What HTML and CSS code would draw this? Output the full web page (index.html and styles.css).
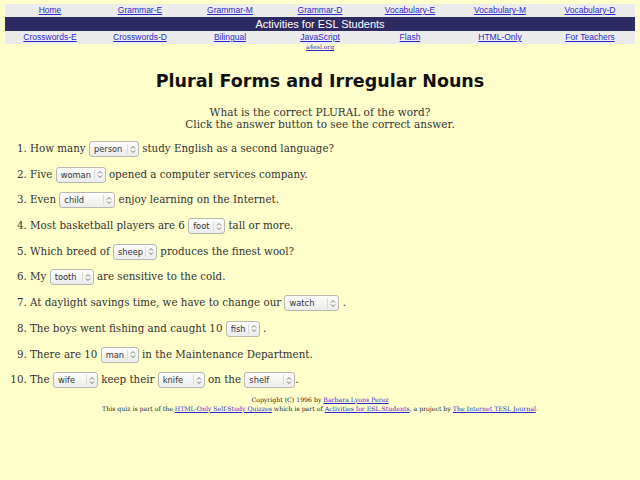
FILE: index.html
```html
<!DOCTYPE html>
<html lang="en">
<head>
<meta charset="utf-8">
<title>Plural Forms and Irregular Nouns</title>
<link rel="stylesheet" href="styles.css">
</head>
<body>
<table class="nav">
  <tr class="links">
    <td><a href="#">Home</a></td>
    <td><a href="#">Grammar-E</a></td>
    <td><a href="#">Grammar-M</a></td>
    <td><a href="#">Grammar-D</a></td>
    <td><a href="#">Vocabulary-E</a></td>
    <td><a href="#">Vocabulary-M</a></td>
    <td><a href="#">Vocabulary-D</a></td>
  </tr>
  <tr class="band">
    <td colspan="7">Activities for ESL Students</td>
  </tr>
  <tr class="links">
    <td><a href="#">Crosswords-E</a></td>
    <td><a href="#">Crosswords-D</a></td>
    <td><a href="#">Bilingual</a></td>
    <td><a href="#">JavaScript</a></td>
    <td><a href="#">Flash</a></td>
    <td><a href="#">HTML-Only</a></td>
    <td><a href="#">For Teachers</a></td>
  </tr>
</table>
<div class="site"><a href="#">a4esl.org</a></div>

<h1 class="title">Plural Forms and Irregular Nouns</h1>

<p class="intro">What is the correct PLURAL of the word?<br>Click the answer button to see the correct answer.</p>

<ol class="quiz">
  <li>How many <span class="sel"><select class="w50"><option>person</option><option>people</option></select><svg class="arr" viewBox="0 0 6 9"><path d="M1 3.5 L3 1.5 L5 3.5 M1 5.5 L3 7.5 L5 5.5"/></svg></span> study English as a second language?</li>
  <li>Five <span class="sel"><select class="w50"><option>woman</option><option>women</option></select><svg class="arr" viewBox="0 0 6 9"><path d="M1 3.5 L3 1.5 L5 3.5 M1 5.5 L3 7.5 L5 5.5"/></svg></span> opened a computer services company.</li>
  <li>Even <span class="sel"><select class="w56"><option>child</option><option>children</option></select><svg class="arr" viewBox="0 0 6 9"><path d="M1 3.5 L3 1.5 L5 3.5 M1 5.5 L3 7.5 L5 5.5"/></svg></span> enjoy learning on the Internet.</li>
  <li>Most basketball players are 6 <span class="sel"><select class="w37"><option>foot</option><option>feet</option></select><svg class="arr" viewBox="0 0 6 9"><path d="M1 3.5 L3 1.5 L5 3.5 M1 5.5 L3 7.5 L5 5.5"/></svg></span> tall or more.</li>
  <li>Which breed of <span class="sel"><select class="w44"><option>sheep</option><option>sheeps</option></select><svg class="arr" viewBox="0 0 6 9"><path d="M1 3.5 L3 1.5 L5 3.5 M1 5.5 L3 7.5 L5 5.5"/></svg></span> produces the finest wool?</li>
  <li>My <span class="sel"><select class="w44"><option>tooth</option><option>teeth</option></select><svg class="arr" viewBox="0 0 6 9"><path d="M1 3.5 L3 1.5 L5 3.5 M1 5.5 L3 7.5 L5 5.5"/></svg></span> are sensitive to the cold.</li>
  <li>At daylight savings time, we have to change our <span class="sel"><select class="w55"><option>watch</option><option>watches</option></select><svg class="arr" viewBox="0 0 6 9"><path d="M1 3.5 L3 1.5 L5 3.5 M1 5.5 L3 7.5 L5 5.5"/></svg></span> .</li>
  <li>The boys went fishing and caught 10 <span class="sel"><select class="w34"><option>fish</option><option>fishes</option></select><svg class="arr" viewBox="0 0 6 9"><path d="M1 3.5 L3 1.5 L5 3.5 M1 5.5 L3 7.5 L5 5.5"/></svg></span> .</li>
  <li>There are 10 <span class="sel"><select class="w38"><option>man</option><option>men</option></select><svg class="arr" viewBox="0 0 6 9"><path d="M1 3.5 L3 1.5 L5 3.5 M1 5.5 L3 7.5 L5 5.5"/></svg></span> in the Maintenance Department.</li>
  <li>The <span class="sel"><select class="w45"><option>wife</option><option>wives</option></select><svg class="arr" viewBox="0 0 6 9"><path d="M1 3.5 L3 1.5 L5 3.5 M1 5.5 L3 7.5 L5 5.5"/></svg></span> keep their <span class="sel"><select class="w47"><option>knife</option><option>knives</option></select><svg class="arr" viewBox="0 0 6 9"><path d="M1 3.5 L3 1.5 L5 3.5 M1 5.5 L3 7.5 L5 5.5"/></svg></span> on the <span class="sel"><select class="w51"><option>shelf</option><option>shelves</option></select><svg class="arr" viewBox="0 0 6 9"><path d="M1 3.5 L3 1.5 L5 3.5 M1 5.5 L3 7.5 L5 5.5"/></svg></span>.</li>
</ol>

<div class="footer">
  <div>Copyright (C) 1996 by <a href="#">Barbara Lyons Perez</a></div>
  <div>This quiz is part of the <a href="#">HTML-Only Self-Study Quizzes</a> which is part of <a href="#">Activities for ESL Students</a>, a project by <a href="#">The Internet TESL Journal</a>.</div>
</div>
</body>
</html>
```

FILE: styles.css
```css
html, body {
  background: #ffffcc;
}
body {
  margin: 0;
  padding: 4px 5px 0 5px;
  font-family: "DejaVu Serif", serif;
  color: #222;
}
a {
  color: #2a2ad0;
}
.nav {
  width: 630px;
  border-collapse: collapse;
  table-layout: fixed;
  font-family: "Liberation Sans", Arial, sans-serif;
}
.nav td {
  padding: 0;
  text-align: center;
}
.links td {
  background: #ececec;
  height: 13px;
  font-size: 8.5px;
  line-height: 13px;
}
.band td {
  background: #2e2b62;
  color: #ffffff;
  height: 14px;
  font-size: 11px;
  line-height: 14px;
}
.site {
  text-align: center;
  font-size: 6px;
  line-height: 8px;
  margin-top: -1px;
}
.title {
  margin: 17px 0 0 0;
  text-align: center;
  font-family: "DejaVu Sans", sans-serif;
  font-weight: bold;
  font-size: 17.5px;
  line-height: 26px;
  color: #111;
}
.intro {
  margin: 12px 0 0 0;
  text-align: center;
  font-size: 10.5px;
  line-height: 12px;
  color: #333;
}
.quiz {
  margin: 10px 0 0 0;
  padding: 0 0 0 25px;
  font-size: 10.3px;
  color: #333;
}
.quiz li {
  height: 25.7px;
  line-height: 16px;
}
.sel {
  position: relative;
  display: inline-block;
  vertical-align: middle;
  height: 16px;
}
.sel select {
  appearance: none;
  -webkit-appearance: none;
  box-sizing: border-box;
  display: block;
  height: 16px;
  margin: 0;
  padding: 0 12px 0 4px;
  border: 1px solid #b8b8b0;
  border-radius: 3px;
  background: linear-gradient(#fdfdfb, #ececea);
  font-family: "DejaVu Sans", sans-serif;
  font-size: 8.3px;
  color: #333;
}
.sel::after {
  content: "";
  position: absolute;
  right: 11px;
  top: 3px;
  height: 10px;
  border-left: 1px solid #dcdcd6;
}
.arr {
  position: absolute;
  right: 3px;
  top: 3.5px;
  width: 6px;
  height: 9px;
  pointer-events: none;
}
.arr path {
  fill: none;
  stroke: #666;
  stroke-width: 0.9;
}
.w34 { width: 34px; }
.w37 { width: 37px; }
.w38 { width: 38px; }
.w44 { width: 44px; }
.w45 { width: 45px; }
.w47 { width: 47px; }
.w50 { width: 50px; }
.w51 { width: 51px; }
.w55 { width: 55px; }
.w56 { width: 56px; }
.footer {
  margin-top: -2px;
  text-align: center;
  font-size: 6.2px;
  line-height: 9px;
  color: #222;
}
```
